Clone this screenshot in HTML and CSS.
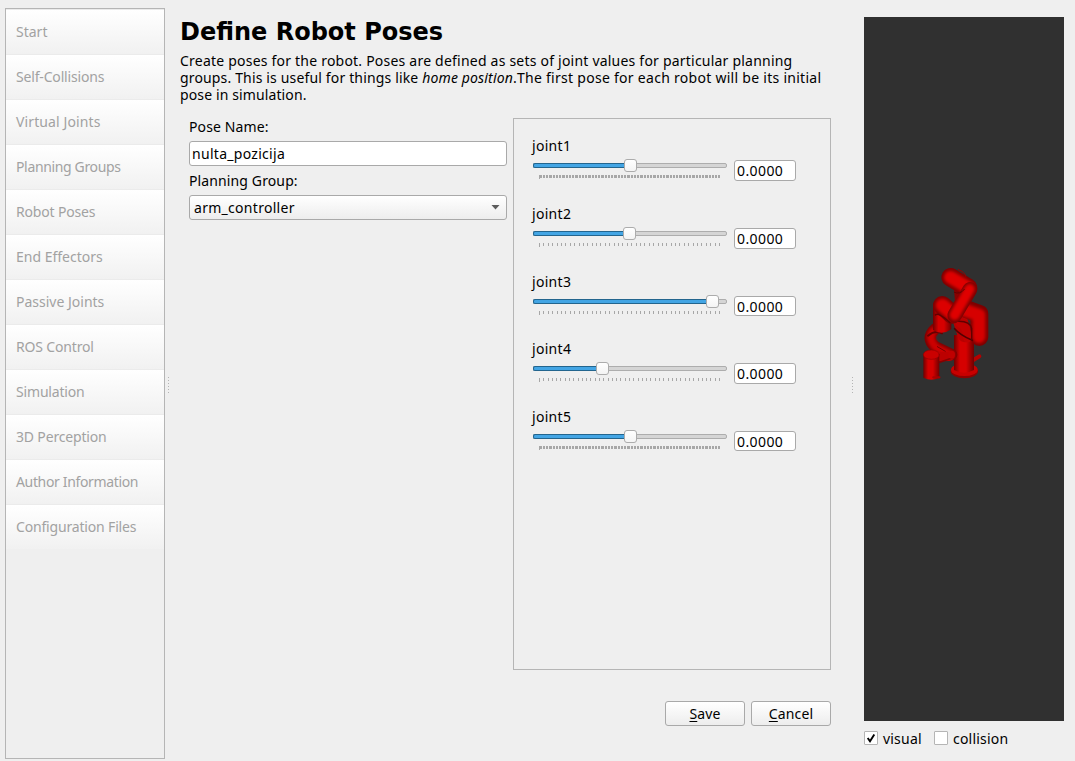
FILE: index.html
```html
<!DOCTYPE html>
<html lang="en">
<head>
<meta charset="utf-8">
<title>Define Robot Poses</title>
<link rel="stylesheet" href="styles.css">
</head>
<body>
<nav class="sidebar">
  <div class="nav-item">Start</div>
  <div class="nav-item snug">Self-Collisions</div>
  <div class="nav-item wide">Virtual Joints</div>
  <div class="nav-item tight">Planning Groups</div>
  <div class="nav-item snug">Robot Poses</div>
  <div class="nav-item">End Effectors</div>
  <div class="nav-item">Passive Joints</div>
  <div class="nav-item snug">ROS Control</div>
  <div class="nav-item snug">Simulation</div>
  <div class="nav-item snug">3D Perception</div>
  <div class="nav-item tight">Author Information</div>
  <div class="nav-item snug">Configuration Files</div>
</nav>
<div class="splitter"><i></i><i></i><i></i><i></i><i></i><i></i></div>
<main class="main">
  <h1>Define Robot Poses</h1>
  <p class="intro"><span class="l1">Create poses for the robot. Poses are defined as sets of joint values for particular planning</span><br><span class="l2">groups. This is useful for things like <em>home position</em>.</span><span class="l2-end">The first pose for each robot will be its initial</span><br><span class="l3">pose in simulation.</span></p>
  <div class="columns">
    <form class="form">
      <label>Pose Name:</label>
      <div class="field">nulta_pozicija</div>
      <label>Planning Group:</label>
      <div class="field select">arm_controller<svg width="9" height="5" viewBox="0 0 9 5"><path d="M.5 0h8L4.500 4.500z" fill="#5c5c5c"/></svg></div>
    </form>
    <section class="joints">
      <div class="joint"><div class="joint-name">joint1</div><div class="joint-row">
        <div class="slider"><div class="groove"><div class="fill" style="width:97px"></div><div class="handle"></div></div>
        <svg class="ticks" width="194" height="4"><path d="M6.500 0v4" /><path class="dense" d="M7 1.500H187"/></svg></div>
        <div class="value">0.0000</div></div></div>
      <div class="joint"><div class="joint-name">joint2</div><div class="joint-row">
        <div class="slider"><div class="groove"><div class="fill" style="width:96px"></div><div class="handle"></div></div>
        <svg class="ticks" width="194" height="4"><path d="M6.500 0v4" /><path class="sparse" d="M10.390 1.500H188"/></svg></div>
        <div class="value">0.0000</div></div></div>
      <div class="joint"><div class="joint-name">joint3</div><div class="joint-row">
        <div class="slider"><div class="groove"><div class="fill" style="width:179px"></div><div class="handle"></div></div>
        <svg class="ticks" width="194" height="4"><path d="M6.500 0v4" /><path class="sparse" d="M10.390 1.500H188"/></svg></div>
        <div class="value short">0.0000</div></div></div>
      <div class="joint"><div class="joint-name">joint4</div><div class="joint-row">
        <div class="slider"><div class="groove"><div class="fill" style="width:69px"></div><div class="handle"></div></div>
        <svg class="ticks" width="194" height="4"><path d="M6.500 0v4" /><path class="sparse closer" d="M10.290 1.500H188"/></svg></div>
        <div class="value">0.0000</div></div></div>
      <div class="joint"><div class="joint-name">joint5</div><div class="joint-row">
        <div class="slider"><div class="groove"><div class="fill" style="width:97px"></div><div class="handle"></div></div>
        <svg class="ticks" width="194" height="4"><path d="M6.500 0v4" /><path class="dense" d="M7 1.500H187"/></svg></div>
        <div class="value short">0.0000</div></div></div>
    </section>
  </div>
  <div class="actions">
    <div class="button"><span><u>S</u>ave</span></div>
    <div class="button"><span><u>C</u>ancel</span></div>
  </div>
</main>
<div class="splitter"><i></i><i></i><i></i><i></i><i></i><i></i></div>
<aside class="preview">
  <svg class="viewport" width="200" height="704" viewBox="0 0 200 704">
    <defs>
      <linearGradient id="cyl"><stop offset="0" stop-color="#700000"/><stop offset=".3" stop-color="#d60000"/><stop offset=".6" stop-color="#d60000"/><stop offset="1" stop-color="#700000"/></linearGradient>
      <filter id="soft" filterUnits="userSpaceOnUse" x="0" y="0" width="270" height="405"><feGaussianBlur stdDeviation="4"/></filter>
    </defs>
    <rect width="200" height="704" fill="#303030"/>
    <g transform="translate(46 238) scale(.33333)" fill="none" stroke-linecap="round" stroke-linejoin="round">
      <!-- base -->
      <path d="M190 315l18-11" stroke="#b60000" stroke-width="12"/>
      <ellipse cx="163" cy="349" rx="41" ry="21" fill="#900000"/>
      <ellipse cx="163" cy="344" rx="40" ry="19" fill="#c80000"/>
      <path d="M132 240h60v105q-30 16-60 0z" fill="url(#cyl)"/>
      <!-- shoulder and right arm -->
      <path d="M142 105L150 190" stroke="#8a0000" stroke-width="20"/>
      <path d="M150 195L165 240" stroke="#b80000" stroke-width="44"/>
      <path d="M163 160L208 177V246" stroke="#7c0000" stroke-width="54"/>
      <path d="M163 165L207 180V245" stroke="#d60000" stroke-width="38" filter="url(#soft)"/>
      <path d="M150 205Q172 215 172 250" stroke="#c00000" stroke-width="24"/>
      <path d="M134 221Q150 240 187 256" stroke="#520000" stroke-width="5"/>
      <path d="M138 199Q180 196 185 220V255" stroke="#600000" stroke-width="4"/>
      <!-- lower left link -->
      <path d="M75 222Q46 250 75 275L125 299" stroke="#7c0000" stroke-width="34"/>
      <path d="M70 228Q52 250 78 277L122 299" stroke="#cc0000" stroke-width="23" filter="url(#soft)"/>
      <path d="M54 242Q75 225 96 235" stroke="#660000" stroke-width="6"/>
      <path d="M82 275l24 14" stroke="#700000" stroke-width="3"/>
      <path d="M89 305L118 304" stroke="#bc0000" stroke-width="28"/>
      <path d="M89 322L128 308" stroke="#860000" stroke-width="5"/>
      <ellipse cx="125" cy="299" rx="10" ry="12" fill="#c00000"/>
      <path d="M40 298h48v70q-24 12-48 0z" fill="url(#cyl)"/>
      <path d="M70 367h18" stroke="#a80000" stroke-width="7"/>
      <ellipse cx="64" cy="299" rx="24" ry="14" fill="#ca0000" stroke="#900000" stroke-width="2"/>
      <!-- middle arm -->
      <path d="M69 145h55v78q-28 20-55 2z" fill="url(#cyl)"/>
      <path d="M97 151L126 178" stroke="#7c0000" stroke-width="56"/>
      <path d="M97 151L128 178" stroke="#dc0000" stroke-width="40" filter="url(#soft)"/>
      <path d="M76 180Q84 170 120 203" stroke="#600000" stroke-width="4"/>
      <!-- upper arm and head -->
      <path d="M122 67L174 98" stroke="#7c0000" stroke-width="56"/>
      <path d="M121 67L175 98" stroke="#de0000" stroke-width="38" filter="url(#soft)"/>
      <path d="M180 103L134 181" stroke="#7c0000" stroke-width="44"/>
      <path d="M179 102L134 180" stroke="#e00000" stroke-width="30" filter="url(#soft)"/>
      <path d="M145 44Q165 50 168 66" stroke="#980000" stroke-width="3"/>
      <path d="M133 112Q150 120 163 103" stroke="#600000" stroke-width="3"/>
    </g>
  </svg>
  <div class="toggles">
    <span class="check"><svg width="12" height="12" viewBox="0 0 12 12"><path d="M2.700 6L5 9.300L9.300 2.500" fill="none" stroke="#000" stroke-width="1.900"/></svg></span><span class="visual">visual</span>
    <span class="check"></span><span class="collision">collision</span>
  </div>
</aside>
</body>
</html>
```
FILE: styles.css
```css
* { box-sizing: border-box; }
body {
  margin: 0;
  width: 1075px;
  height: 761px;
  padding: 8px 11px 2px 5px;
  display: flex;
  background: #efefef;
  color: #000;
  font: 14px/17px "Noto Sans", sans-serif;
  letter-spacing: .12px;
  overflow: hidden;
}
.sidebar { width: 160px; height: 751px; border: 1px solid #b5b5b5; }
.nav-item {
  height: 45px;
  padding: 0 10px 2px;
  display: flex;
  align-items: center;
  white-space: nowrap;
  color: #a2a2a2;
  letter-spacing: 0;
  background: linear-gradient(#fff, #f1f1f1);
  border-top: 1px solid #ebebeb;
}
.nav-item.snug { letter-spacing: -.17px; }
.nav-item.tight { letter-spacing: -.35px; }
.nav-item.wide { letter-spacing: .12px; }
.splitter {
  width: 6px;
  padding-top: 2px;
  display: flex;
  flex-direction: column;
  align-items: center;
  justify-content: center;
  gap: 2px;
}
.splitter i { width: 1px; height: 1px; background: #b4b4b4; }
.main { width: 660px; margin-left: 9px; margin-right: 19px; white-space: nowrap; }
.main + .splitter { margin-right: 9px; margin-left: -10px; }
h1 {
  margin: 10px 0 0;
  font: bold 24px/28px "DejaVu Sans", sans-serif;
  letter-spacing: 0;
}
.intro { margin: 6px 0 0; height: 51px; }
.l1 { letter-spacing: .215px; }
.l2 { letter-spacing: .155px; }
.l2-end { letter-spacing: .28px; }
.columns { display: flex; margin-top: 15px; }
.form { width: 318px; margin: 0 6px 0 9px; }
.form label { display: block; height: 17px; margin-bottom: 6px; }
.field {
  height: 25px;
  margin-bottom: 6px;
  padding: 0 2px;
  line-height: 24px;
  letter-spacing: .29px;
  background: #fff;
  border: 1px solid #a9a9a9;
  border-radius: 3px;
}
.select {
  display: flex;
  align-items: center;
  justify-content: space-between;
  padding: 0 6px 0 4px;
  background: linear-gradient(#fff, #ededed);
}
.joints {
  width: 318px;
  height: 552px;
  border: 1px solid #b5b5b5;
  padding: 18px 0 0 18px;
}
.joint { height: 68px; }
.joint:nth-child(3) { height: 67px; }
.joint-name { height: 17px; letter-spacing: .3px; }
.joint-row { display: flex; gap: 7px; }
.slider { width: 194px; padding: 9px 0 0 0; margin-left: 1px; }
.groove {
  height: 5px;
  display: flex;
  align-items: center;
  background: #d5d5d5;
  border: 1px solid #adadad;
  border-radius: 2px;
}
.fill {
  height: 5px;
  margin-left: -1px;
  background: #43a5e4;
  border: 1px solid #23658e;
  border-right: 0;
  border-radius: 2px 0 0 2px;
}
.handle {
  width: 13px;
  height: 13px;
  margin-left: -6px;
  background: linear-gradient(#fff, #f4f4f4);
  border: 1px solid #acacac;
  border-radius: 3px;
}
.ticks {
  display: block;
  margin-top: 7px;
  fill: none;
  stroke: #a7a7a7;
  shape-rendering: crispEdges;
}
.dense { stroke-width: 3; stroke-dasharray: 2 1 2 1 2 1 3 1; }
.sparse { stroke-width: 3; stroke-dasharray: 1 3.39; }
.sparse.closer { stroke-dasharray: 1 3.286; }
.value {
  width: 62px;
  height: 21px;
  margin-top: 6px;
  padding-left: 2px;
  line-height: 20px;
  letter-spacing: .4px;
  background: #fff;
  border: 1px solid #a9a9a9;
  border-radius: 3px;
}
.value.short { height: 20px; }
.actions { display: flex; justify-content: flex-end; gap: 6px; margin: 31px 9px 0 0; }
.button {
  width: 80px;
  height: 25px;
  display: flex;
  align-items: center;
  justify-content: center;
  background: linear-gradient(#fff, #ededed);
  border: 1px solid #a9a9a9;
  border-radius: 3px;
}
.button u { text-underline-offset: 2px; }
.preview { width: 200px; padding-top: 9px; }
.viewport { display: block; }
.toggles { display: flex; align-items: center; margin-top: 8px; letter-spacing: .2px; }
.check { width: 14px; height: 14px; background: #fff; border: 1px solid #b5b5b5; border-radius: 1px; }
.check svg { display: block; }
.visual, .collision { margin-left: 5px; padding-top: 1px; }
.visual { width: 51px; }
```
